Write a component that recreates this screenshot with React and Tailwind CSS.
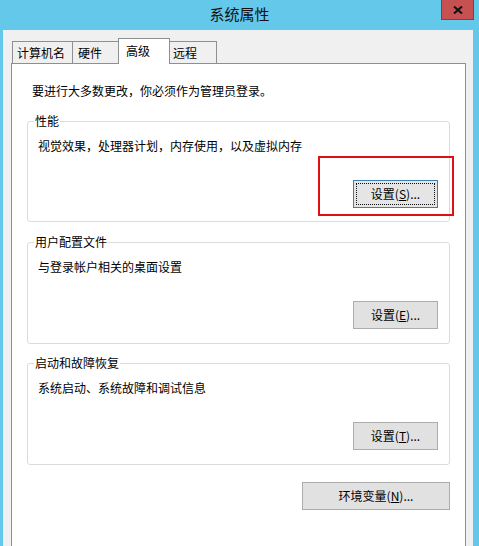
import React from 'react';

function WinButton({ text, hotkey, width, focused }) {

  return (
    <button
      className={
        focused
          ? 'relative h-[28px] bg-[#e5e5e5] border border-[#3c7fb1] text-[12px] leading-[16px] text-black flex items-center justify-center'
          : 'relative h-[28px] bg-[#e1e1e1] border border-[#adadad] text-[12px] leading-[16px] text-black flex items-center justify-center'
      }
      style={{ width }}
    >

      {focused && (
        <span className="absolute inset-[2px] border border-dotted border-[#111]" />
      )}

      <span>
        {text}(<span className="underline">{hotkey}</span>)...
      </span>

    </button>
  );
}

function GroupBox({ title, desc, hotkey, className, highlight }) {

  return (
    <fieldset className={'border border-[#dcdcdc] rounded-[3px] ' + className}>

      <legend className="ml-[6px] px-[1px] text-[12px] leading-[16px]">
        {title}
      </legend>

      <p className="pl-[10px] pt-[9px] text-[12px] leading-[16px]">
        {desc}
      </p>

      <div className="flex justify-end pr-[11px] mt-[26px]">

        <div className="relative">

          <WinButton text="设置" hotkey={hotkey} width={85} focused={highlight} />

          {/* red marker drawn over the screenshot */}
          {highlight && (
            <div className="absolute top-[-24px] bottom-[-8px] left-[-35px] right-[-16px] border-2 border-[#e01010] pointer-events-none" />
          )}

        </div>

      </div>

    </fieldset>
  );
}

const tabs = [
  { name: '计算机名', cls: 'w-[61px] pl-[4px]' },
  { name: '硬件', cls: 'w-[47px] pl-[5px] -ml-px' },
  { name: '高级', cls: 'w-[52px] pl-[7px] -ml-px', active: true },
  { name: '远程', cls: 'w-[48px] pl-[3px] -ml-px' },
];

export default function App() {

  return (
    <div className="w-[479px] h-[546px] overflow-hidden bg-[#63c8ea] flex flex-col font-['Noto_Sans_CJK_SC','Microsoft_YaHei',sans-serif] text-black">

      {/* title bar */}
      <div className="relative h-[30px] shrink-0 flex items-center justify-center">

        <span className="text-[15px] leading-[20px] text-[#111] -mt-[2px]">
          系统属性
        </span>

        <div className="absolute top-0 right-[5px] w-[33px] h-[20px] bg-[#c75050] border border-t-0 border-[#8f3a3a] flex items-center justify-center">
          <svg width="10" height="8" viewBox="0 0 10 8">
            <path d="M1 0.5 L9 7.5 M9 0.5 L1 7.5" stroke="#111" strokeWidth="2" />
          </svg>
        </div>

      </div>

      {/* dialog body */}
      <div className="flex-1 ml-[3px] mr-[6px] bg-[#f0f0f0] flex flex-col">

        <div className="flex items-end h-[25px] mt-[8px] pl-[9px]">

          {tabs.map((t) => (
            <div
              key={t.name}
              className={
                t.active
                  ? 'relative z-10 h-[26px] -mb-px bg-white border border-b-0 border-[#8e8f8f] text-[12px] leading-[16px] flex items-center pb-[2px] ' + t.cls
                  : 'h-[22px] bg-[#f0f0f0] border border-b-0 border-[#8e8f8f] text-[12px] leading-[16px] flex items-center pt-[1px] ' + t.cls
              }
            >
              {t.name}
            </div>
          ))}

        </div>

        <div className="ml-[8px] w-[455px] h-[520px] bg-white border border-[#8e8f8f] px-[15px] pt-[19px]">

          <p className="pl-[5px] text-[12px] leading-[16px]">
            要进行大多数更改，你必须作为管理员登录。
          </p>

          <GroupBox
            title="性能"
            desc="视觉效果，处理器计划，内存使用，以及虚拟内存"
            hotkey="S"
            className="mt-[14px] pb-[13px]"
            highlight
          />

          <GroupBox
            title="用户配置文件"
            desc="与登录帐户相关的桌面设置"
            hotkey="E"
            className="mt-[12px] pb-[14px]"
          />

          <GroupBox
            title="启动和故障恢复"
            desc="系统启动、系统故障和调试信息"
            hotkey="T"
            className="mt-[11px] pb-[14px]"
          />

          <div className="flex justify-end mt-[17px]">
            <WinButton text="环境变量" hotkey="N" width={148} />
          </div>

        </div>

      </div>

    </div>
  );
}
